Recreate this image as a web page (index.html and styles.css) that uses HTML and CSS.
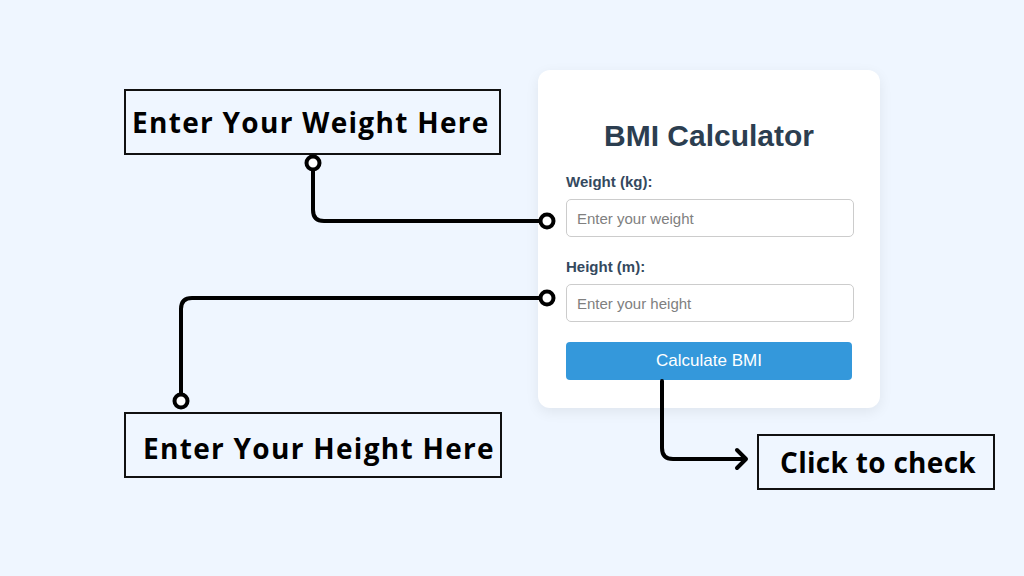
FILE: index.html
```html
<!DOCTYPE html>
<html lang="en">
<head>
  <meta charset="UTF-8" />
  <meta name="viewport" content="width=device-width, initial-scale=1.0" />
  <title>BMI Calculator - How it works</title>
  <link rel="stylesheet" href="styles.css">
</head>
<body>
  <div class="stage">
    <!-- Calculator card -->
    <div class="calc-card">
      <h1>BMI Calculator</h1>
      <label for="weight">Weight (kg):</label>
      <input type="number" id="weight" placeholder="Enter your weight">
      <label for="height">Height (m):</label>
      <input type="number" id="height" placeholder="Enter your height">
      <button type="button" class="btn">Calculate BMI</button>
    </div>

    <!-- Callouts -->
    <div class="callout callout-weight">Enter Your Weight Here</div>
    <div class="callout callout-height">Enter Your Height Here</div>
    <div class="callout callout-click">Click to check</div>

    <!-- Connector lines -->
    <svg class="connectors" width="1024" height="576" viewBox="0 0 1024 576">
      <g fill="none" stroke="#000" stroke-width="4" stroke-linecap="round" stroke-linejoin="round">
        <path d="M313 169 V210 Q313 221 324 221 H540" />
        <path d="M540 298 H192 Q181 298 181 309 V395" />
        <path d="M662 381 V448 Q662 459 673 459 H745" />
        <path d="M737 450 L746 459 L737 468" />
      </g>
      <g fill="#fff" stroke="#000" stroke-width="4">
        <circle cx="313" cy="163" r="6.5" />
        <circle cx="547" cy="221" r="6.5" />
        <circle cx="547" cy="298" r="6.5" />
        <circle cx="181" cy="401" r="6.5" />
      </g>
    </svg>
  </div>
</body>
</html>
```

FILE: styles.css
```css
body {
  margin: 0;
  background: #eff6ff;
  font-family: 'Liberation Sans', Arial, sans-serif;
}

.stage {
  position: relative;
  width: 1024px;
  height: 576px;
  overflow: hidden;
}

.calc-card {
  position: absolute;
  left: 538px;
  top: 70px;
  width: 286px;
  padding: 28px;
  background: #fff;
  border-radius: 12px;
  box-shadow: 0 4px 14px rgba(0, 0, 0, 0.07);
  display: flex;
  flex-direction: column;
}

h1 {
  margin: 20px 0 19px;
  font-size: 30px;
  line-height: 36px;
  text-align: center;
  color: #2c3e50;
}

label {
  display: block;
  font-size: 15px;
  line-height: 18px;
  font-weight: bold;
  color: #34495e;
  margin-bottom: 8px;
}

input {
  box-sizing: border-box;
  width: 288px;
  height: 38px;
  padding: 0 10px;
  border: 1px solid #ccc;
  border-radius: 5px;
  font-family: inherit;
  font-size: 15px;
  margin-bottom: 21px;
}

input::placeholder {
  color: #808080;
}

.btn {
  margin-top: -1px;
  width: 286px;
  height: 38px;
  background-color: #3498db;
  color: #fff;
  border: none;
  border-radius: 4px;
  font-family: inherit;
  font-size: 17px;
  cursor: pointer;
}

.callout {
  position: absolute;
  box-sizing: border-box;
  border: 2px solid #111;
  display: flex;
  align-items: center;
  font-family: 'Open Sans', 'Noto Sans', sans-serif;
  font-weight: 700;
  font-size: 28px;
  letter-spacing: 1.3px;
  color: #000;
  white-space: nowrap;
}

.callout-weight {
  left: 124px;
  top: 89px;
  width: 377px;
  height: 66px;
  padding-left: 6px;
}

.callout-height {
  left: 124px;
  top: 412px;
  width: 378px;
  height: 66px;
  padding-left: 17px;
  padding-top: 5px;
}

.callout-click {
  left: 757px;
  top: 434px;
  width: 238px;
  height: 56px;
  padding-left: 21px;
  letter-spacing: 0.3px;
}

.connectors {
  position: absolute;
  left: 0;
  top: 0;
  pointer-events: none;
}
```
